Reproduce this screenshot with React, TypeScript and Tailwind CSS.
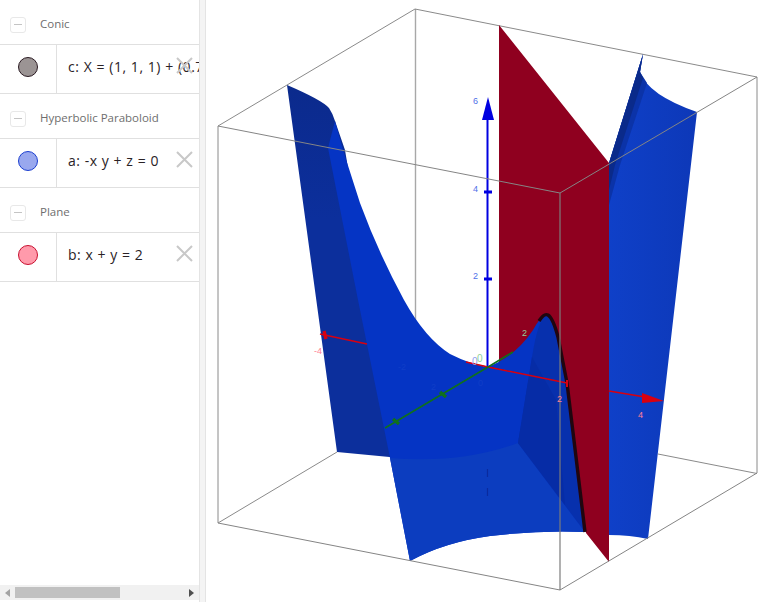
const sectionRows = [
	{ title: "Conic", formula: "c: X = (1, 1, 1) + (0.7", fill: "bg-[#9b9494]", ring: "border-[#2a1a22]" },
	{ title: "Hyperbolic Paraboloid", formula: "a: -x y + z = 0", fill: "bg-[#99a8ee]", ring: "border-[#1c3fd0]" },
	{ title: "Plane", formula: "b: x + y = 2", fill: "bg-[#ff9aab]", ring: "border-[#c81030]" },
];

function AlgebraSection({ title, formula, fill, ring }: (typeof sectionRows)[number]) {
	return (
		<div>
			<div className="flex h-[45px] items-center border-b border-[#e0e0e0] pl-[10px] pt-[5px]">
				<div className="flex h-[16px] w-[16px] items-center justify-center rounded-[3px] border border-[#e8e8e8]">
					<div className="h-px w-[8px] bg-[#c4c4c4]" />
				</div>
				<span className="mb-[2px] ml-[14px] whitespace-nowrap font-['Open_Sans',sans-serif] text-[11.5px] text-[#6e6e6e]">{title}</span>
			</div>
			<div className="relative flex h-[49px] border-b border-[#e0e0e0]">
				<div className="flex w-[57px] shrink-0 items-center justify-center border-r border-[#e0e0e0] pb-[4px]">
					<div className={`h-[20px] w-[20px] rounded-full border ${fill} ${ring}`} />
				</div>
				<div className="flex-1 overflow-hidden whitespace-nowrap pl-[11px] pt-[12px] font-['Open_Sans',sans-serif] text-[14px] leading-[20px] tracking-[0.55px] text-[#2a2226]">
					{formula}
				</div>
				<svg className="absolute left-[176px] top-[12px]" width="18" height="18" viewBox="0 0 18 18">
					<path d="M1 1 L16 16 M16 1 L1 16" stroke="#c8c8c8" strokeWidth="2" fill="none" />
				</svg>
			</div>
		</div>
	);
}

function Plot() {
	return (
		<svg className="block h-full w-full" viewBox="206 0 564 602">
			<defs>
				<linearGradient id="rightBlue" x1="0" x2="1" y1="0" y2="0">
					<stop offset="0" stopColor="#0f40c8" />
					<stop offset="1" stopColor="#0d38b8" />
				</linearGradient>
				<linearGradient id="wing" gradientUnits="userSpaceOnUse" x1="0" x2="0" y1="85" y2="220">
					<stop offset="0" stopColor="#0b2a8c" />
					<stop offset="1" stopColor="#0c2f9c" />
				</linearGradient>
			</defs>
			{/* box, back edges */}
			<path d="M415.5 9 V340" stroke="#a8a8a8" strokeWidth="1.4" fill="none" />
			<g stroke="#8a8a8a" strokeWidth="1" fill="none">
				<path d="M415 9 L757 77 M415 9 L218 126 M218 126 V523 M757 77 V473" />
				<path d="M218 523 L337 452 M658 454 L757 473.5" />
			</g>

			{/* z axis, behind the surface */}
			<path d="M487.5 367 V118" stroke="#0000e0" strokeWidth="2" />
			<path d="M488 97 L494 120 L482 120 Z" fill="#0000e0" />
			<path d="M484 192 H492 M484 279 H492" stroke="#0000e0" strokeWidth="3" />

			{/* plane b */}
			<path d="M499 25 L609 163 V562 L586 533 L560 400 L499 400 Z" fill="#8f001f" />

			{/* right part of the paraboloid */}
			<path d="M643 54 L640 72 Q648 95 697 112 L648 539 Q630 535 609 535 V163 Z" fill="url(#rightBlue)" />
			<path d="M643 54 L640 72 L647 83 L620 165 L609 205 V163 Z" fill="#0b33a8" />
			<path d="M643 54 L640 72 L643 78 L615 165 L609 190 V163 Z" fill="#0a2a8a" />

			{/* left wing, dark side. runs under the main surface so no seam shows */}
			<path d="M287 85 Q322 100 329 108 Q333 114 335 121 L345 150 L370 300 L400 458 L337 452 Z" fill="url(#wing)" />

			{/* main surface */}
			<path d="M335 121 L343 150 L360 203 Q378 252 404 300 Q425 338 450 354 Q470 364 487 367 Q515 357 533 330 Q540 317 546 315 Q552 318 558 337 L567 383 L576 457 L585 532 Q540 530 490 536 Q445 542 410 561 L390 458 L358 300 L328 148 Z" fill="#0534c4" />
			<path d="M390 458 Q460 464 518 443 L585 532 Q540 530 490 536 Q445 542 410 561 Z" fill="#0c3dbf" />
			<path d="M546 315 Q538 320 532 357 L518 443 L585 532 L576 457 L567 383 L558 337 Q552 318 546 315 Z" fill="#0730ad" />
			<path d="M532 357 L518 443 L565 505 L556 400 Z" fill="#062ca6" />

			{/* conic c */}
			<path d="M539 321 Q544 313 548 315 Q553 318 558 337 L567 383 L576 457 L585 532" stroke="#20060f" strokeWidth="3.4" fill="none" />

			{/* axes */}
			<path d="M320 334 L367 344" stroke="#d80010" strokeWidth="1.6" />
			<path d="M324 331 L326 339" stroke="#d80010" strokeWidth="3.4" />
			<path d="M466 362 L488 367 L567 383" stroke="#d80010" strokeWidth="1.6" />
			<path d="M567 380 V387" stroke="#d80010" strokeWidth="2" />
			<path d="M609 391 L645 397" stroke="#d80010" strokeWidth="1.6" />
			<path d="M642 393 L664 401 L642 403 Z" fill="#d80010" />
			<path d="M385 428 L488 367 L513 352" stroke="#10701c" strokeWidth="1.6" />
			<path d="M393 419 L399 424 M440 392 L446 397" stroke="#10701c" strokeWidth="3.4" />
			<path d="M487.5 469 V477 M487.5 488 V496" stroke="#0a2a9e" strokeWidth="1.2" />

			{/* front edges drawn over everything */}
			<g stroke="#858585" strokeWidth="1" fill="none">
				<path d="M218 126 L560 193 L757 77" />
				<path d="M218 523 L560 590 L757 473" />
			</g>
			<path d="M560 193 V590" stroke="#7c7c7c" strokeWidth="1.2" />

			{/* tick labels */}
			<g fontFamily="'Liberation Sans', sans-serif" fontSize="9">
				<g fill="#4f6fe8">
					<text x="473" y="104">6</text>
					<text x="473" y="192">4</text>
					<text x="473" y="279">2</text>
					<text x="472" y="365" fill="#8d9ff0" fontSize="10">0</text>
				</g>
				<g fill="#ff8095">
					<text x="314" y="354">-4</text>
					<text x="557" y="402">2</text>
					<text x="638" y="418">4</text>
				</g>
				<g fill="#8fd09a">
					<text x="522" y="336">2</text>
					<text x="477" y="362" fontSize="10">0</text>
				</g>
				<g fill="#2a55d0" opacity="0.3">
					<text x="398" y="370">-2</text>
					<text x="431" y="390">2</text>
					<text x="478" y="386">0</text>
				</g>
			</g>
		</svg>
	);
}

export default function App() {
	return (
		<div className="flex h-[602px] w-[770px] overflow-hidden bg-white">
			<div className="flex w-[199px] shrink-0 flex-col justify-between pb-[2px]">
				<div>
					{sectionRows.map((s) => (
						<AlgebraSection key={s.title} {...s} />
					))}
				</div>
				<div className="flex h-[15px] items-center bg-[#f1f1f1]">
					<div className="flex w-[15px] justify-center">
						<div className="h-0 w-0 border-y-[4px] border-r-[5px] border-y-transparent border-r-[#a3a3a3]" />
					</div>
					<div className="h-[11px] w-[105px] bg-[#c1c1c1]" />
					<div className="flex-1" />
					<div className="flex w-[15px] justify-center">
						<div className="h-0 w-0 border-y-[4px] border-l-[5px] border-y-transparent border-l-[#505050]" />
					</div>
				</div>
			</div>
			<div className="w-[7px] shrink-0 border-x border-[#e4e4e4] bg-[#f4f4f4]" />
			<div className="min-w-0 flex-1">
				<Plot />
			</div>
		</div>
	);
}
